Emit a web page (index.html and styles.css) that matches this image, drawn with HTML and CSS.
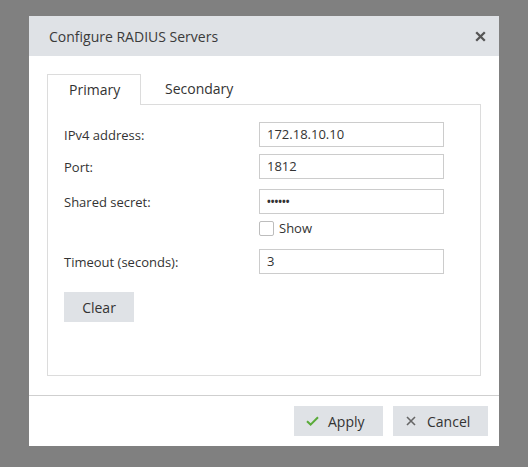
FILE: index.html
```html
<!DOCTYPE html>
<html>
<head>
<meta charset="utf-8">
<link rel="stylesheet" href="styles.css">
</head>
<body>
<div class="dialog">
  <div class="header">
    <span class="title">Configure RADIUS Servers</span>
    <span class="close"><svg width="11" height="11" viewBox="0 0 11 11"><path d="M1.2 1.2L9.8 9.8M9.8 1.2L1.2 9.8" stroke="#555" stroke-width="2.3" fill="none"/></svg></span>
  </div>
  <div class="content">
    <div class="tabs">
      <div class="tab active">Primary</div>
      <div class="tab">Secondary</div>
    </div>
    <div class="panel">
      <div class="row r1"><label>IPv4 address:</label><div class="input">172.18.10.10</div></div>
      <div class="row r2"><label>Port:</label><div class="input">1812</div></div>
      <div class="row r3"><label>Shared secret:</label><div class="input secret">••••••</div></div>
      <div class="row r4"><span></span><div class="check"><span class="box"></span><span>Show</span></div></div>
      <div class="row r5"><label>Timeout (seconds):</label><div class="input">3</div></div>
      <div class="btn clear">Clear</div>
    </div>
  </div>
  <div class="footer">
    <div class="btn apply"><svg width="13" height="10" viewBox="0 0 13 10"><path d="M1 5.2L4.6 8.6L12 1.2" stroke="#5aab3a" stroke-width="2" fill="none"/></svg><span>Apply</span></div>
    <div class="btn cancel"><svg width="10" height="10" viewBox="0 0 10 10"><path d="M1 1L9 9M9 1L1 9" stroke="#666" stroke-width="1.6" fill="none"/></svg><span>Cancel</span></div>
  </div>
</div>
</body>
</html>
```
FILE: styles.css
```css
html, body {
  margin: 0;
  padding: 0;
  background: #808080;
  font-family: "Open Sans", "Noto Sans", sans-serif;
  font-size: 13px;
  color: #333;
}
.dialog {
  margin: 16px 0 0 29px;
  width: 470px;
  height: 430px;
  background: #fff;
  display: flex;
  flex-direction: column;
}
.header {
  height: 40px;
  background: #dfe2e6;
  display: flex;
  align-items: center;
  justify-content: space-between;
  padding: 0 13px 0 20px;
}
.title {
  font-size: 14px;
  color: #3a3a3a;
}
.close {
  display: flex;
}
.content {
  padding: 18px 18px 0 18px;
  height: 339px;
  box-sizing: border-box;
}
.tabs {
  display: flex;
  height: 30px;
}
.tab {
  font-size: 14px;
  padding: 0 20px;
  line-height: 30px;
  box-sizing: border-box;
  height: 31px;
  position: relative;
  z-index: 1;
}
.tab.active {
  border: 1px solid #dcdcdc;
  border-bottom: none;
  background: #fff;
  padding: 0 0 0 21px;
  width: 94px;
  line-height: 30px;
}
.tab + .tab {
  padding-left: 24px;
}
.panel {
  border: 1px solid #dcdcdc;
  height: 272px;
  box-sizing: border-box;
  padding: 17px 16px 0 16px;
}
.row {
  display: grid;
  grid-template-columns: 195px 185px;
  align-items: center;
}
.r2 { margin-top: 7px; }
.r3 { margin-top: 10px; }
.r4 { margin-top: 7px; }
.r5 { margin-top: 13px; }
.input {
  height: 25px;
  box-sizing: border-box;
  border: 1px solid #cccccc;
  padding: 0 7px;
  line-height: 23px;
  color: #333;
}
.secret {
  font-size: 10px;
  font-weight: bold;
}
.check {
  display: flex;
  align-items: center;
  gap: 5px;
  height: 15px;
  line-height: 15px;
}
.box {
  width: 15px;
  height: 15px;
  box-sizing: border-box;
  border: 1px solid #bdbdbd;
  border-radius: 2px;
}
.btn {
  background: #dfe2e6;
  height: 30px;
  display: flex;
  align-items: center;
  justify-content: center;
  box-sizing: border-box;
  font-size: 14px;
}
.clear {
  width: 70px;
  margin-top: 18px;
}
.footer {
  border-top: 1px solid #cfcfcf;
  padding: 10px 11px 10px 0;
  display: flex;
  justify-content: flex-end;
  gap: 10px;
}
.apply {
  width: 89px;
  justify-content: flex-start;
  padding-left: 12px;
  gap: 9px;
}
.cancel {
  width: 95px;
  justify-content: flex-start;
  padding-left: 13px;
  gap: 11px;
}
```
